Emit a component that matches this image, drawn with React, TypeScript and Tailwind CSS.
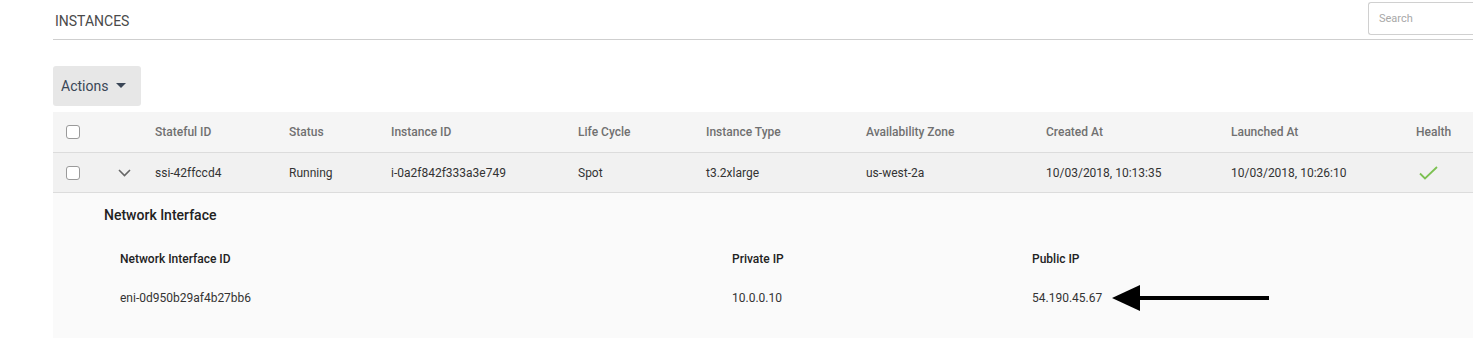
import { useState } from "react";

const cols = "grid grid-cols-[102px_134px_102px_187px_128px_160px_180px_185px_185px_1fr]";

const headers = ["Stateful ID", "Status", "Instance ID", "Life Cycle", "Instance Type", "Availability Zone", "Created At", "Launched At"];

const row = ["ssi-42ffccd4", "Running", "i-0a2f842f333a3e749", "Spot", "t3.2xlarge", "us-west-2a", "10/03/2018, 10:13:35", "10/03/2018, 10:26:10"];

function Checkbox() {
  return <span className="block w-[14px] h-[14px] rounded-[3px] border border-[#9a9a9a] bg-white" />;
}

export default function App() {
  const [open, setOpen] = useState(true);
  return (
    <div className="h-[338px] overflow-hidden bg-white pl-[53px]" style={{ fontFamily: "Roboto, 'Liberation Sans', sans-serif" }}>
      {/* title bar */}
      <div className="flex items-center justify-between h-[40px] border-b border-[#cfcfcf]">
        <span className="ml-[2px] mt-[3px] text-[14px] text-[#4a4a4a]">INSTANCES</span>
        <div className="self-start mt-[2px] w-[105px] h-[33px] border border-[#d0d0d0] rounded-l-[3px] border-r-0 flex items-center pl-[10px]">
          <span className="mt-[2px] text-[11px] text-[#a8a8a8]">Search</span>
        </div>
      </div>

      {/* actions */}
      <div className="mt-[26px]">
        <button className="flex items-center gap-[8px] h-[40px] w-[88px] pl-[8px] rounded-[3px] bg-[#e7e7e7] text-[14px] text-[#3a4656]">
          Actions
          <svg width="10" height="6" viewBox="0 0 10 6"><path d="M0 0h10L5 5z" fill="#3a4656" /></svg>
        </button>
      </div>

      {/* table */}
      <div className="mt-[6px]">
        <div className={`${cols} h-[41px] items-center bg-[#f5f5f5] border-b border-[#dcdcdc] text-[12px] font-medium text-[#707070]`}>
          <div className="pl-[13px]"><Checkbox /></div>
          {headers.map((h) => <div key={h}>{h}</div>)}
          <div>Health</div>
        </div>
        <div className={`${cols} h-[40px] items-center bg-[#f1f1f1] border-b border-[#dcdcdc] text-[12px] text-[#333]`}>
          <div className="pl-[13px] flex items-center">
            <Checkbox />
            <button onClick={() => setOpen(!open)} className="ml-[38px]">
              <svg width="13" height="8" viewBox="0 0 13 8"><path d="M1 1l5.5 5.5L12 1" stroke="#666" strokeWidth="1.6" fill="none" /></svg>
            </button>
          </div>
          {row.map((c, i) => <div key={i}>{c}</div>)}
          <div className="pl-[3px]">
            <svg width="19" height="14" viewBox="0 0 19 14"><path d="M1 7.5l5 5L18 1" stroke="#7cc152" strokeWidth="1.8" fill="none" /></svg>
          </div>
        </div>

        {open && (
          <div className="bg-[#fafafa] h-[200px] pl-[51px] pt-[14px]">
            <div className="text-[14px] font-medium text-[#222] leading-[16px]">Network Interface</div>
            <div className="pl-[16px] mt-[28px] grid grid-cols-[612px_300px_1fr] text-[12px] text-[#333]">
              <div className="font-medium text-[#222] leading-[16px]">Network Interface ID</div>
              <div className="font-medium text-[#222] leading-[16px]">Private IP</div>
              <div className="font-medium text-[#222] leading-[16px]">Public IP</div>
              <div className="mt-[23px] leading-[16px]">eni-0d950b29af4b27bb6</div>
              <div className="mt-[23px] leading-[16px]">10.0.0.10</div>
              <div className="mt-[23px] h-[16px] leading-[16px] flex items-center">
                54.190.45.67
                <svg className="ml-[10px] shrink-0" width="158" height="28" viewBox="0 0 158 28">
                  <path d="M0 14L28 1v26z" fill="#000" />
                  <rect x="26" y="12" width="131" height="4" fill="#000" />
                </svg>
              </div>
            </div>
          </div>
        )}
      </div>
    </div>
  );
}
